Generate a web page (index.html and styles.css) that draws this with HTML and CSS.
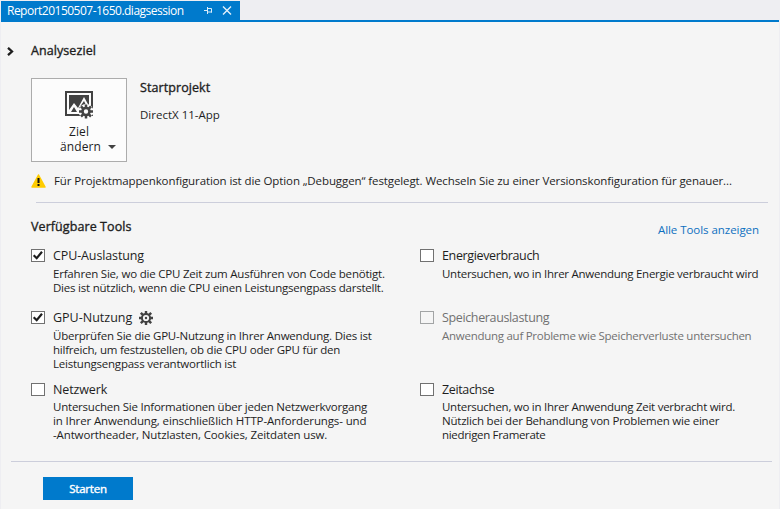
FILE: index.html
```html
<!DOCTYPE html>
<html lang="de">
<head>
<meta charset="utf-8">
<title>Report20150507-1650.diagsession</title>
<link rel="stylesheet" href="styles.css">
</head>
<body>
<div class="window">
  <header class="tabs">
    <div class="tab">
      <span class="tab-title">Report20150507-1650.diagsession</span>
      <svg class="pin" width="9" height="9" viewBox="0 0 9 9"><path d="M0 4.500h3M3.500 1v7M3.500 2.500H7.500v4M3.500 6h4.500" fill="none" stroke="#d9ecfa"/></svg>
      <svg class="close" width="10" height="9" viewBox="0 0 10 9"><path d="M1 .5l8 8M9 .5l-8 8" fill="none" stroke="#e4f1fb" stroke-width="1.400"/></svg>
    </div>
  </header>
  <main class="content">
    <div class="section-head">
      <svg class="chevron" width="7" height="9" viewBox="0 0 7 9"><path d="M1 .8l4 3.700-4 3.700" fill="none" stroke="#1e1e1e" stroke-width="2.300"/></svg>
      <h2 class="heading">Analyseziel</h2>
    </div>
    <section class="target">
      <button class="target-button">
        <svg class="target-icon" width="29" height="28" viewBox="0 0 29 28">
          <path d="M0 0h28v25H0z" fill="#424242"/><path d="M2 2h24v21H2z" fill="#fcfcfc"/><path d="M4 4h20v17H4z" fill="#424242"/>
          <path d="M4 21v-2l5-7 4 5 6-11 5 9v6z" fill="#fcfcfc"/>
          <path d="M6 21l3-5 3 5zM14 17l5-7 3 6-3 5h-3z" fill="#424242"/>
          <circle cx="21" cy="20.500" r="7.500" fill="#fcfcfc"/>
          <g fill="none" stroke="#424242"><circle cx="21" cy="20.500" r="3.500" stroke-width="2.600"/><path d="M21 13.500v3M21 24.500v3M14 20.500h3M25 20.500h3M16 15.500l2.200 2.200M23.800 23.300l2.200 2.200M26 15.500l-2.200 2.200M18.200 23.300L16 25.500" stroke-width="2.500"/></g>
        </svg>
        <span class="target-label">Ziel</span>
        <span class="target-label target-label-last">ändern<i class="caret"></i></span>
      </button>
      <div class="project">
        <h3 class="heading project-title">Startprojekt</h3>
        <p class="project-name">DirectX 11-App</p>
      </div>
    </section>
    <div class="warning">
      <svg width="15" height="14" viewBox="0 0 15 14"><path d="M7.500 1L14 13H1z" fill="#fc0" stroke="#fc0" stroke-width="1.500" stroke-linejoin="round"/><path d="M6.500 4h2v5h-2zM6.500 10h2v2h-2z" fill="#111"/></svg>
      <span>Für Projektmappenkonfiguration ist die Option „Debuggen“ festgelegt. Wechseln Sie zu einer Versionskonfiguration für genauer...</span>
    </div>
    <div class="tools-head">
      <h2 class="heading">Verfügbare Tools</h2>
      <a class="link">Alle Tools anzeigen</a>
    </div>
    <div class="tools">
      <div class="tool">
        <span class="box"><svg width="12" height="11" viewBox="0 0 12 11"><path d="M1.700 5.200L4.700 8.200 10 1.800" fill="none" stroke="#1e1e1e" stroke-width="2.200"/></svg></span>
        <div>
          <div class="name">CPU-Auslastung</div>
          <p class="desc">Erfahren Sie, wo die CPU Zeit zum Ausführen von Code benötigt.<br>
            <span class="snug">Dies ist nützlich, wenn die CPU einen Leistungsengpass darstellt.</span></p>
        </div>
      </div>
      <div class="tool">
        <span class="box"></span>
        <div>
          <div class="name tight">Energieverbrauch</div>
          <p class="desc tight">Untersuchen, wo in Ihrer Anwendung Energie verbraucht wird</p>
        </div>
      </div>
      <div class="tool">
        <span class="box"><svg width="12" height="11" viewBox="0 0 12 11"><path d="M1.700 5.200L4.700 8.200 10 1.800" fill="none" stroke="#1e1e1e" stroke-width="2.200"/></svg></span>
        <div>
          <div class="name wide">GPU-Nutzung
            <svg class="gear" width="14" height="14" viewBox="0 0 14 14"><g fill="none" stroke="#424242"><circle cx="7" cy="7" r="4.100" stroke-width="2"/><path d="M7 0v3M7 11v3M0 7h3M11 7h3M1.800 1.800l2.400 2.400M9.800 9.800l2.400 2.400M12.200 1.800L9.800 4.200M4.200 9.800l-2.400 2.400" stroke-width="2.400"/></g><circle cx="7" cy="7" r="1.200" fill="#424242"/></svg>
          </div>
          <p class="desc">Überprüfen Sie die GPU-Nutzung in Ihrer Anwendung. Dies ist<br>
            <span class="snug">hilfreich, um festzustellen, ob die CPU oder GPU für den</span><br>
            <span class="snug">Leistungsengpass verantwortlich ist</span></p>
        </div>
      </div>
      <div class="tool disabled">
        <span class="box"></span>
        <div>
          <div class="name tight">Speicherauslastung</div>
          <p class="desc tight">Anwendung auf Probleme wie Speicherverluste untersuchen</p>
        </div>
      </div>
      <div class="tool">
        <span class="box"></span>
        <div>
          <div class="name">Netzwerk</div>
          <p class="desc raised"><span class="snug">Untersuchen Sie Informationen über jeden Netzwerkvorgang</span><br>
            <span class="loose">in Ihrer Anwendung, einschließlich HTTP-Anforderungs- und</span><br>
            <span class="loose">-Antwortheader, Nutzlasten, Cookies, Zeitdaten usw.</span></p>
        </div>
      </div>
      <div class="tool">
        <span class="box"></span>
        <div>
          <div class="name tight">Zeitachse</div>
          <p class="desc raised"><span class="tight">Untersuchen, wo in Ihrer Anwendung Zeit verbracht wird.</span><br>
            <span class="snug">Nützlich bei der Behandlung von Problemen wie einer</span><br>
            <span class="tighter">niedrigen Framerate</span></p>
        </div>
      </div>
    </div>
    <footer class="actions">
      <button class="start">Starten</button>
    </footer>
  </main>
</div>
</body>
</html>
```
FILE: styles.css
```css
* {
  box-sizing: border-box;
}

body {
  margin: 0;
  font: 11.5px/14px "Open Sans", "Noto Sans", sans-serif;
  color: #1e1e1e;
  background: #eeeef2;
}

h2, h3, p {
  margin: 0;
}

svg {
  display: block;
  flex: none;
}

.window {
  width: 780px;
  height: 509px;
  padding: 1px 1px 0;
  display: flex;
  flex-direction: column;
  overflow: hidden;
  white-space: nowrap;
}

.tabs {
  height: 21px;
  border-bottom: 2px solid #007acc;
}

.tab {
  width: 239px;
  height: 19px;
  padding-left: 6px;
  display: flex;
  align-items: center;
  background: #007acc;
  color: #fff;
}

.tab-title {
  width: 197px;
  font-size: 12px;
  letter-spacing: -0.51px;
}

.close {
  margin-left: 9px;
}

.content {
  flex: 1;
  background: #f5f5f5;
}

.heading {
  font-size: 12.5px;
  line-height: 18px;
  font-weight: 400;
  letter-spacing: 0.08px;
  -webkit-text-stroke: 0.35px currentColor;
}

.section-head {
  padding: 20px 0 0 6px;
  display: flex;
  align-items: center;
}

.section-head .heading {
  margin-left: 17px;
}

.target {
  margin: 18px 0 0 30px;
  display: flex;
}

.target-button {
  width: 96px;
  height: 84px;
  padding: 12px 0 0;
  display: flex;
  flex-direction: column;
  align-items: center;
  border: 1px solid #acacac;
  background: #fcfcfc;
  color: #1e1e1e;
  font: 12px/15px "Open Sans", "Noto Sans", sans-serif;
}

.target-icon {
  margin-bottom: 5px;
}

.target-label {
  letter-spacing: 0.1px;
}

.target-label-last {
  padding-left: 18px;
  display: flex;
  align-items: center;
}

.caret {
  margin-left: 7px;
  border: 4px solid transparent;
  border-top-color: #424242;
  border-bottom: 0;
}

.project {
  margin: 1px 0 0 13px;
}

.project-title {
  letter-spacing: 0.08px;
}

.project-name {
  margin-top: 11px;
}

.warning {
  margin: 12px 0 0 30px;
  display: flex;
  align-items: center;
  letter-spacing: -0.098px;
}

.warning span {
  margin-left: 8px;
}

.tools-head {
  margin: 14px 11px 0 35px;
  padding: 15px 9px 0 0;
  display: flex;
  justify-content: space-between;
  border-top: 1px solid #cccedb;
}

.tools-head .heading {
  margin-left: -5px;
}

.link {
  margin-top: 5px;
  color: #0e70c0;
  letter-spacing: -0.05px;
}

.tools {
  margin: 10px 0 0 30px;
  display: grid;
  grid-template-columns: 389px 1fr;
  grid-template-rows: 62px 72px 80px;
}

.tool {
  display: flex;
}

.box {
  flex: none;
  width: 14px;
  height: 13px;
  margin: 2px 8px 0 0;
  border: 1px solid #717171;
  background: #fff;
}

.name {
  display: flex;
  align-items: center;
  font-size: 12.5px;
  line-height: 18px;
  letter-spacing: -0.12px;
}

.name.tight {
  letter-spacing: -0.36px;
}

.name.wide {
  letter-spacing: 0;
}

.gear {
  margin-left: 7px;
}

.desc {
  margin-top: 2px;
  letter-spacing: -0.2px;
}

.desc.raised {
  margin-top: 1px;
}

.snug {
  letter-spacing: -0.22px;
}

.loose {
  letter-spacing: -0.13px;
}

.tight {
  letter-spacing: -0.265px;
}

.tighter {
  letter-spacing: -0.32px;
}

.disabled {
  color: #717171;
}

.disabled .box {
  border-color: #a2a4a5;
  background: #f5f5f5;
}

.actions {
  margin: 0 7px 0 10px;
  padding: 15px 0 0 32px;
  border-top: 1px solid #cccedb;
}

.start {
  display: block;
  width: 90px;
  height: 23px;
  padding: 0;
  border: 0;
  background: #007acc;
  color: #fff;
  font: 400 11.5px/22px "Open Sans", "Noto Sans", sans-serif;
  letter-spacing: -0.2px;
  -webkit-text-stroke: 0.4px currentColor;
}
```
